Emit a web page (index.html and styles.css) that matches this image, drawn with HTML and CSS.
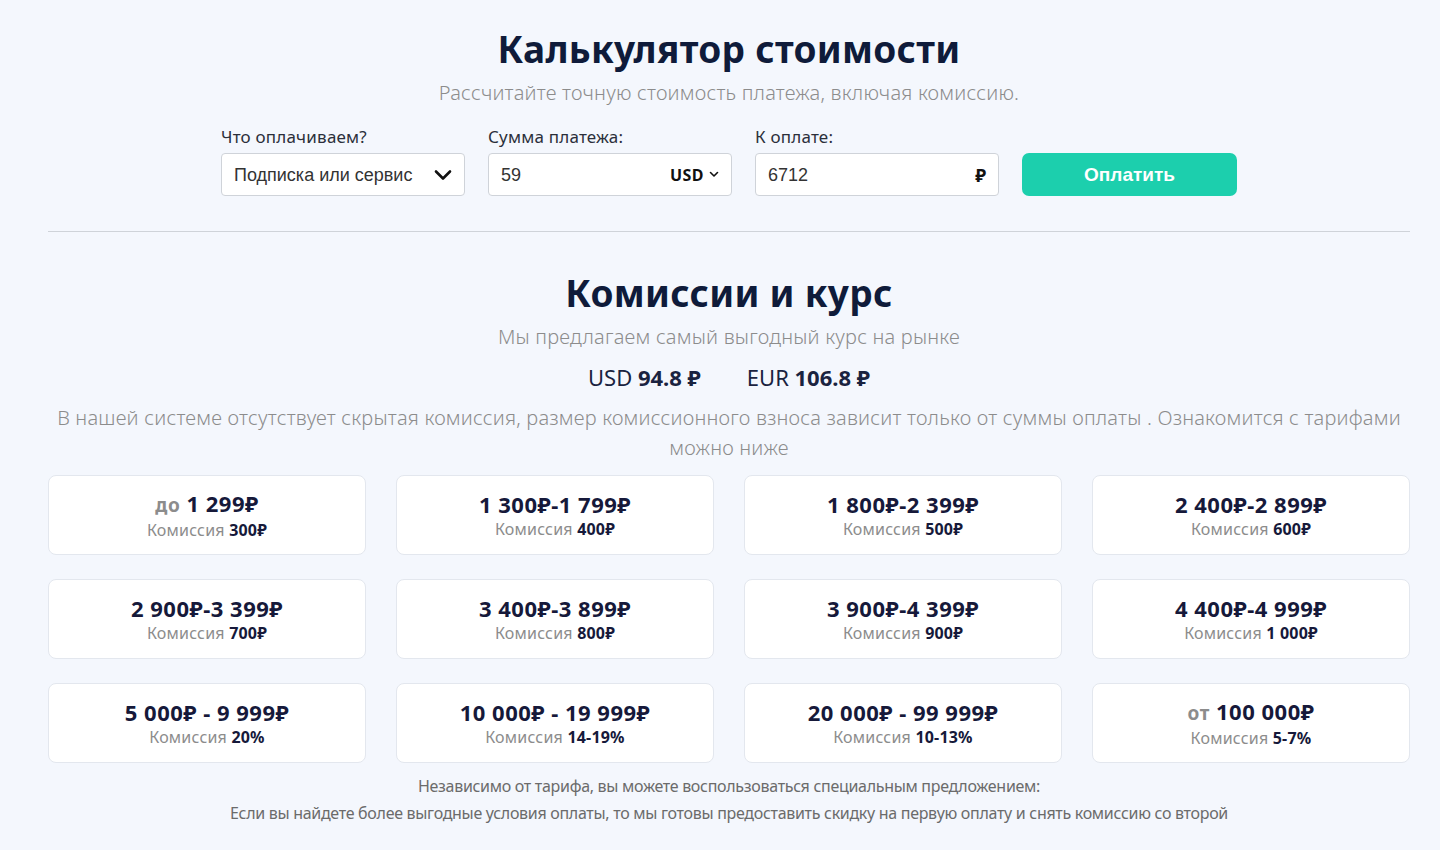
FILE: index.html
```html
<!DOCTYPE html>
<html lang="ru">
<head>
    <meta charset="UTF-8">
    <meta name="viewport" content="width=device-width, initial-scale=1.0">
    <title>Калькулятор стоимости</title>
    <link rel="stylesheet" href="styles.css">
</head>
<body>
    <div class="container">
        <section class="calculator">
            <h1>Калькулятор стоимости</h1>
            <p class="subtitle">Рассчитайте точную стоимость платежа, включая комиссию.</p>

            <div class="calc-form">
                <div class="form-group">
                    <label for="payType">Что оплачиваем?</label>
                    <div class="field">
                        <span class="field-value" id="payType">Подписка или сервис</span>
                        <svg class="chevron-big" width="18" height="12" viewBox="0 0 18 12"><path d="M2 2.5 L9 9.5 L16 2.5" fill="none" stroke="#111" stroke-width="2.6" stroke-linecap="round" stroke-linejoin="round"/></svg>
                    </div>
                </div>
                <div class="form-group">
                    <label for="amount">Сумма платежа:</label>
                    <div class="field">
                        <span class="field-value" id="amount">59</span>
                        <span class="currency">USD
                            <svg width="10" height="7" viewBox="0 0 10 7"><path d="M1.5 1.5 L5 5 L8.5 1.5" fill="none" stroke="#111" stroke-width="1.6" stroke-linecap="round" stroke-linejoin="round"/></svg>
                        </span>
                    </div>
                </div>
                <div class="form-group">
                    <label for="total">К оплате:</label>
                    <div class="field">
                        <span class="field-value" id="total">6712</span>
                        <span class="rub">₽</span>
                    </div>
                </div>
                <button class="pay-button">Оплатить</button>
            </div>
        </section>

        <hr class="divider">

        <section class="tariffs">
            <h2>Комиссии и курс</h2>
            <p class="subtitle">Мы предлагаем самый выгодный курс на рынке</p>
            <div class="rates">
                <span>USD <b>94.8 ₽</b></span>
                <span>EUR <b>106.8 ₽</b></span>
            </div>
            <p class="note">В нашей системе отсутствует скрытая комиссия, размер комиссионного взноса зависит только от суммы оплаты . Ознакомится с тарифами можно ниже</p>

            <div class="cards">
                <div class="card"><div class="card-range"><span class="muted">до</span> 1 299₽</div><div class="card-fee">Комиссия <b>300₽</b></div></div>
                <div class="card"><div class="card-range">1 300₽-1 799₽</div><div class="card-fee">Комиссия <b>400₽</b></div></div>
                <div class="card"><div class="card-range">1 800₽-2 399₽</div><div class="card-fee">Комиссия <b>500₽</b></div></div>
                <div class="card"><div class="card-range">2 400₽-2 899₽</div><div class="card-fee">Комиссия <b>600₽</b></div></div>
                <div class="card"><div class="card-range">2 900₽-3 399₽</div><div class="card-fee">Комиссия <b>700₽</b></div></div>
                <div class="card"><div class="card-range">3 400₽-3 899₽</div><div class="card-fee">Комиссия <b>800₽</b></div></div>
                <div class="card"><div class="card-range">3 900₽-4 399₽</div><div class="card-fee">Комиссия <b>900₽</b></div></div>
                <div class="card"><div class="card-range">4 400₽-4 999₽</div><div class="card-fee">Комиссия <b>1 000₽</b></div></div>
                <div class="card"><div class="card-range">5 000₽ - 9 999₽</div><div class="card-fee">Комиссия <b>20%</b></div></div>
                <div class="card"><div class="card-range">10 000₽ - 19 999₽</div><div class="card-fee">Комиссия <b>14-19%</b></div></div>
                <div class="card"><div class="card-range">20 000₽ - 99 999₽</div><div class="card-fee">Комиссия <b>10-13%</b></div></div>
                <div class="card"><div class="card-range"><span class="muted">от</span> 100 000₽</div><div class="card-fee">Комиссия <b>5-7%</b></div></div>
            </div>

            <div class="footnote">
                <p>Независимо от тарифа, вы можете воспользоваться специальным предложением:</p>
                <p>Если вы найдете более выгодные условия оплаты, то мы готовы предоставить скидку на первую оплату и снять комиссию со второй</p>
            </div>
        </section>
    </div>
</body>
</html>
```

FILE: styles.css
```css
body {
    margin: 0;
    background: #f4f7fd;
    font-family: "Noto Sans", "Open Sans", sans-serif;
    color: #0f1b3a;
}
.container {
    margin: 0 30px 0 48px;
    padding-top: 24px;
}
h1, h2 {
    margin: 0;
    text-align: center;
    font-size: 37px;
    font-weight: 700;
    line-height: 50px;
    color: #0f1b3a;
    letter-spacing: 0.3px;
}
.subtitle {
    margin: 6px 0 0;
    text-align: center;
    font-size: 20px;
    line-height: 26px;
    letter-spacing: 0.2px;
    color: #8c8c8c;
    font-weight: 300;
}
.calc-form {
    display: flex;
    justify-content: center;
    align-items: flex-end;
    gap: 23px;
    margin-top: 20px;
}
.form-group {
    display: flex;
    flex-direction: column;
    width: 244px;
}
label {
    font-size: 17px;
    line-height: 22px;
    letter-spacing: 0.2px;
    color: #2b2f3a;
    margin-bottom: 5px;
}
.field {
    height: 43px;
    box-sizing: border-box;
    background: #fff;
    border: 1px solid #cfd3d9;
    border-radius: 4px;
    display: flex;
    align-items: center;
    justify-content: space-between;
    padding: 0 12px;
    font-family: "Liberation Sans", Arial, sans-serif;
    font-size: 18px;
    color: #333;
}
.field-value {
    padding-top: 2px;
}
.currency {
    display: flex;
    align-items: center;
    gap: 5px;
    font-family: "Noto Sans", sans-serif;
    font-weight: 700;
    font-size: 16px;
    letter-spacing: 0.5px;
    color: #111;
}
.rub {
    font-family: "Noto Sans", sans-serif;
    font-weight: 700;
    font-size: 18px;
    color: #111;
}
.pay-button {
    width: 215px;
    height: 43px;
    border: none;
    border-radius: 7px;
    background: #1ccfad;
    color: #fff;
    font-family: "Liberation Sans", Arial, sans-serif;
    font-weight: 700;
    font-size: 19px;
    cursor: pointer;
}
.divider {
    border: none;
    border-top: 1px solid #cfd3d9;
    margin: 35px 0 0;
}
.tariffs {
    padding-top: 36px;
}
.rates {
    display: flex;
    justify-content: center;
    gap: 46px;
    margin-top: 13px;
    font-size: 22px;
    line-height: 28px;
    color: #1a2340;
}
.rates b {
    font-weight: 700;
}
.note {
    margin: 12px 0 0;
    text-align: center;
    font-size: 20px;
    line-height: 30px;
    letter-spacing: 0.2px;
    color: #8c8c8c;
    font-weight: 300;
}
.cards {
    display: grid;
    grid-template-columns: repeat(4, 1fr);
    column-gap: 30px;
    row-gap: 24px;
    margin-top: 12px;
}
.card {
    background: #fff;
    border: 1px solid #e3e7ee;
    border-radius: 8px;
    height: 80px;
    box-sizing: border-box;
    display: flex;
    flex-direction: column;
    align-items: center;
    justify-content: center;
}
.card-range {
    font-size: 22px;
    font-weight: 700;
    line-height: 27px;
    letter-spacing: 0.5px;
    color: #16193a;
}
.card-range .muted {
    color: #8c8c8c;
    font-size: 19px;
}
.card-fee {
    font-size: 16px;
    line-height: 22px;
    letter-spacing: 0.2px;
    color: #8c8c8c;
}
.card-fee b {
    color: #16193a;
}
.footnote {
    margin-top: 10px;
    text-align: center;
    font-size: 16px;
    color: #6b6b6b;
    letter-spacing: -0.3px;
}
.footnote p {
    margin: 0;
    line-height: 27px;
}
```
